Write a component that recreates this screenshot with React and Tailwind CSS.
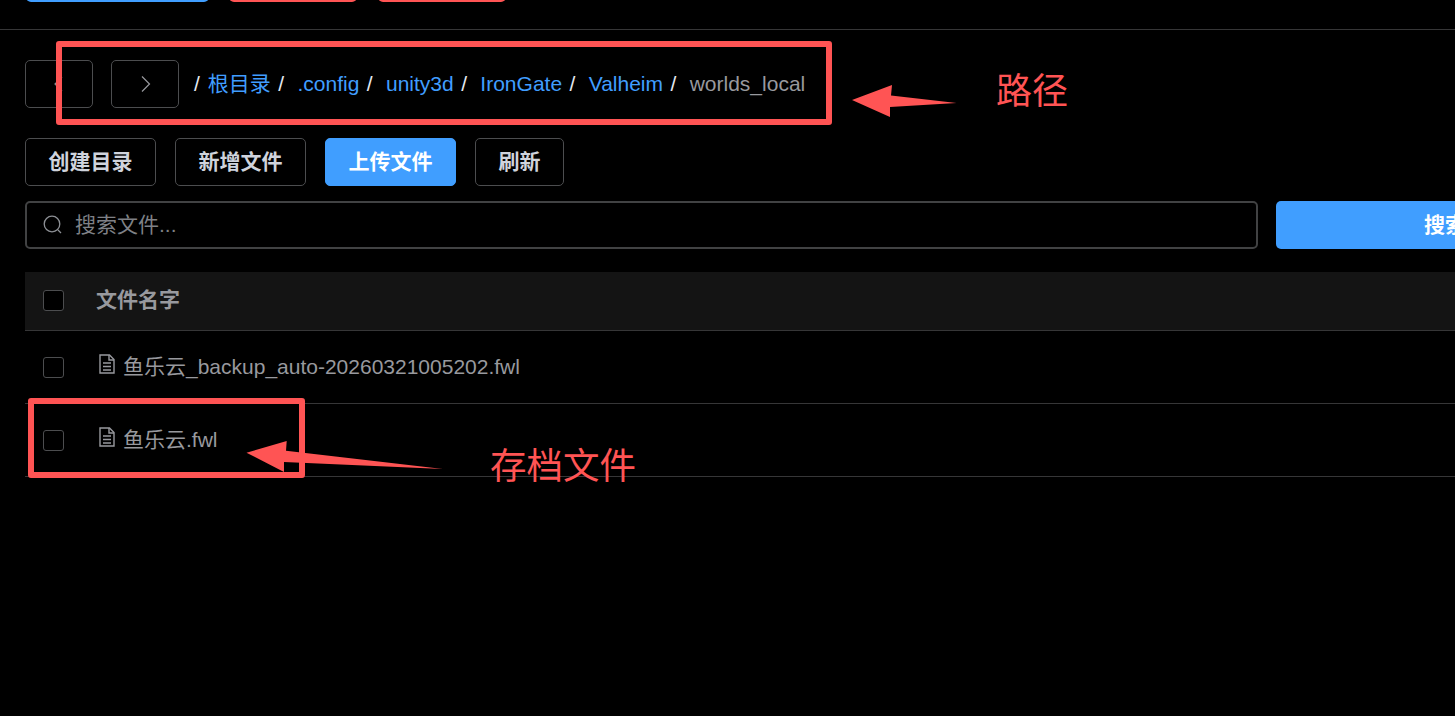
import React from 'react';

const font = { sans: 'font-["Liberation_Sans","Noto_Sans_CJK_SC",sans-serif]' };

const crumbs = ['根目录', '.config', 'unity3d', 'IronGate', 'Valheim'];
const files = ['鱼乐云_backup_auto-20260321005202.fwl', '鱼乐云.fwl'];

function DocIcon() {
  return (
    <svg width="16" height="20" viewBox="0 0 16 20" fill="none" stroke="#98999e" strokeWidth="1.4" className="mb-[7px] shrink-0">
      <path d="M1 1h9.500L15 5.500V19H1z" />
      <path d="M10 1v5h5" />
      <path d="M4 9h8M4 12.500h8M4 16h8" />
    </svg>
  );
}

function Checkbox() {
  return <div className="w-[21px] h-[21px] rounded-[3px] border border-[#4c4d4f] bg-black shrink-0" />;
}

function ToolButton({ label, primary }) {
  return (
    <button className={`h-[48px] px-[22.5px] rounded-[5px] border text-[21px] font-bold ${primary ? 'border-[#409eff] bg-[#409eff] text-white' : 'border-[#4c4d4f] text-[#cfd3dc]'}`}>
      {label}
    </button>
  );
}

export default function App() {
  return (
    <div className={`relative w-[1455px] h-[716px] overflow-hidden bg-black ${font.sans}`}>
      <div className="w-[1614px] pl-[25px]">
        {/* top bar, mostly scrolled away */}
        <div className="flex -mt-[46px] h-[48px] pl-px">
          <div className="w-[183px] h-[48px] rounded-[5px] bg-[#409eff]" />
          <div className="w-[128px] h-[48px] rounded-[5px] bg-[#ff5454] ml-[20px]" />
          <div className="w-[128px] h-[48px] rounded-[5px] bg-[#ff5454] ml-[21px]" />
        </div>

        <div className="h-px bg-[#363637] mt-[27px] -ml-[25px]" style={{ width: 1455 }} />

        {/* path */}
        <div className="flex items-center mt-[30px] h-[48px]">
          <button className="w-[68px] h-[48px] rounded-[5px] border border-[#4c4d4f] flex items-center justify-center">
            <svg width="12" height="18" viewBox="0 0 12 18" fill="none" stroke="#8d9095" strokeWidth="1.2"><path d="M9 2 2 9l7 7" /></svg>
          </button>
          <button className="w-[68px] h-[48px] rounded-[5px] border border-[#4c4d4f] flex items-center justify-center ml-[18px]">
            <svg width="12" height="18" viewBox="0 0 12 18" fill="none" stroke="#98999e" strokeWidth="1.2"><path d="m3 1.500 7.500 7.500-7.500 7.500" /></svg>
          </button>
          <div className="flex items-center ml-[15px] text-[21px]">
            <span className="text-[#e5eaf3] mr-[8px]">/</span>
            {crumbs.map((c) => (
              <React.Fragment key={c}>
                <span className="text-[#409eff]">{c}</span>
                <span className="text-[#e5eaf3] ml-[7.5px] mr-[13.3px]">/</span>
              </React.Fragment>
            ))}
            <span className="text-[#98999e]">worlds_local</span>
          </div>
        </div>

        {/* actions */}
        <div className="flex gap-[19px] mt-[30px]">
          <ToolButton label="创建目录" />
          <ToolButton label="新增文件" />
          <ToolButton label="上传文件" primary />
          <ToolButton label="刷新" />
        </div>

        {/* search */}
        <div className="flex gap-[18px] mt-[15px]">
          <div className="w-[1233px] h-[48px] rounded-[5px] border-2 border-[#414243] flex items-center pl-[16px] gap-[12px]">
            <svg width="20" height="20" viewBox="0 0 20 20" fill="none" stroke="#8d9095" strokeWidth="1.3">
              <circle cx="9" cy="9" r="7.800" />
              <path d="m15 15 3 3" />
            </svg>
            <span className="text-[21px] text-[#7f8186]">搜索文件...</span>
          </div>
          <button className="w-[338px] h-[48px] rounded-[5px] bg-[#409eff] text-white text-[21px] font-bold">搜索</button>
        </div>

        {/* files */}
        <div className="mt-[23px]">
          <div className="h-[59px] bg-[#141414] border-b border-[#363637] flex items-center pl-[18px] pb-[2px]">
            <Checkbox />
            <span className="ml-[32px] text-[21px] font-bold text-[#98999e]">文件名字</span>
          </div>
          {files.map((f) => (
            <div key={f} className="h-[73px] border-b border-[#363637] flex items-center pl-[18px]">
              <Checkbox />
              <div className="ml-[35px] flex items-center gap-[8px] text-[21px] text-[#98999e]">
                <DocIcon />
                <span>{f}</span>
              </div>
            </div>
          ))}
        </div>
      </div>

      {/* screenshot annotations */}
      <div className="absolute left-[56px] top-[41px] w-[776px] h-[84px] border-[6px] border-[#ff5454] rounded-[3px]" />
      <div className="absolute left-[28px] top-[398px] w-[277px] h-[80px] border-[6px] border-[#ff5454] rounded-[3px]" />
      <svg className="absolute left-[840px] top-[70px]" width="130" height="60" viewBox="840 70 130 60">
        <path d="M852 100 892 85 891 95.500 956.500 103 890 107 890 117z" fill="#ff5454" />
      </svg>
      <svg className="absolute left-[240px] top-[430px]" width="210" height="50" viewBox="240 430 210 50">
        <path d="M246.500 452.700 286.700 441 286 450.700 443 469 284 462 284 472z" fill="#ff5454" />
      </svg>
      <span className="absolute left-[996px] top-[62px] text-[36px] leading-[52px] text-[#ff5454] font-['Noto_Sans_CJK_SC',sans-serif]">路径</span>
      <span className="absolute left-[490px] top-[438px] text-[36.500px] leading-[52px] text-[#ff5454] font-['Noto_Sans_CJK_SC',sans-serif]">存档文件</span>
    </div>
  );
}
